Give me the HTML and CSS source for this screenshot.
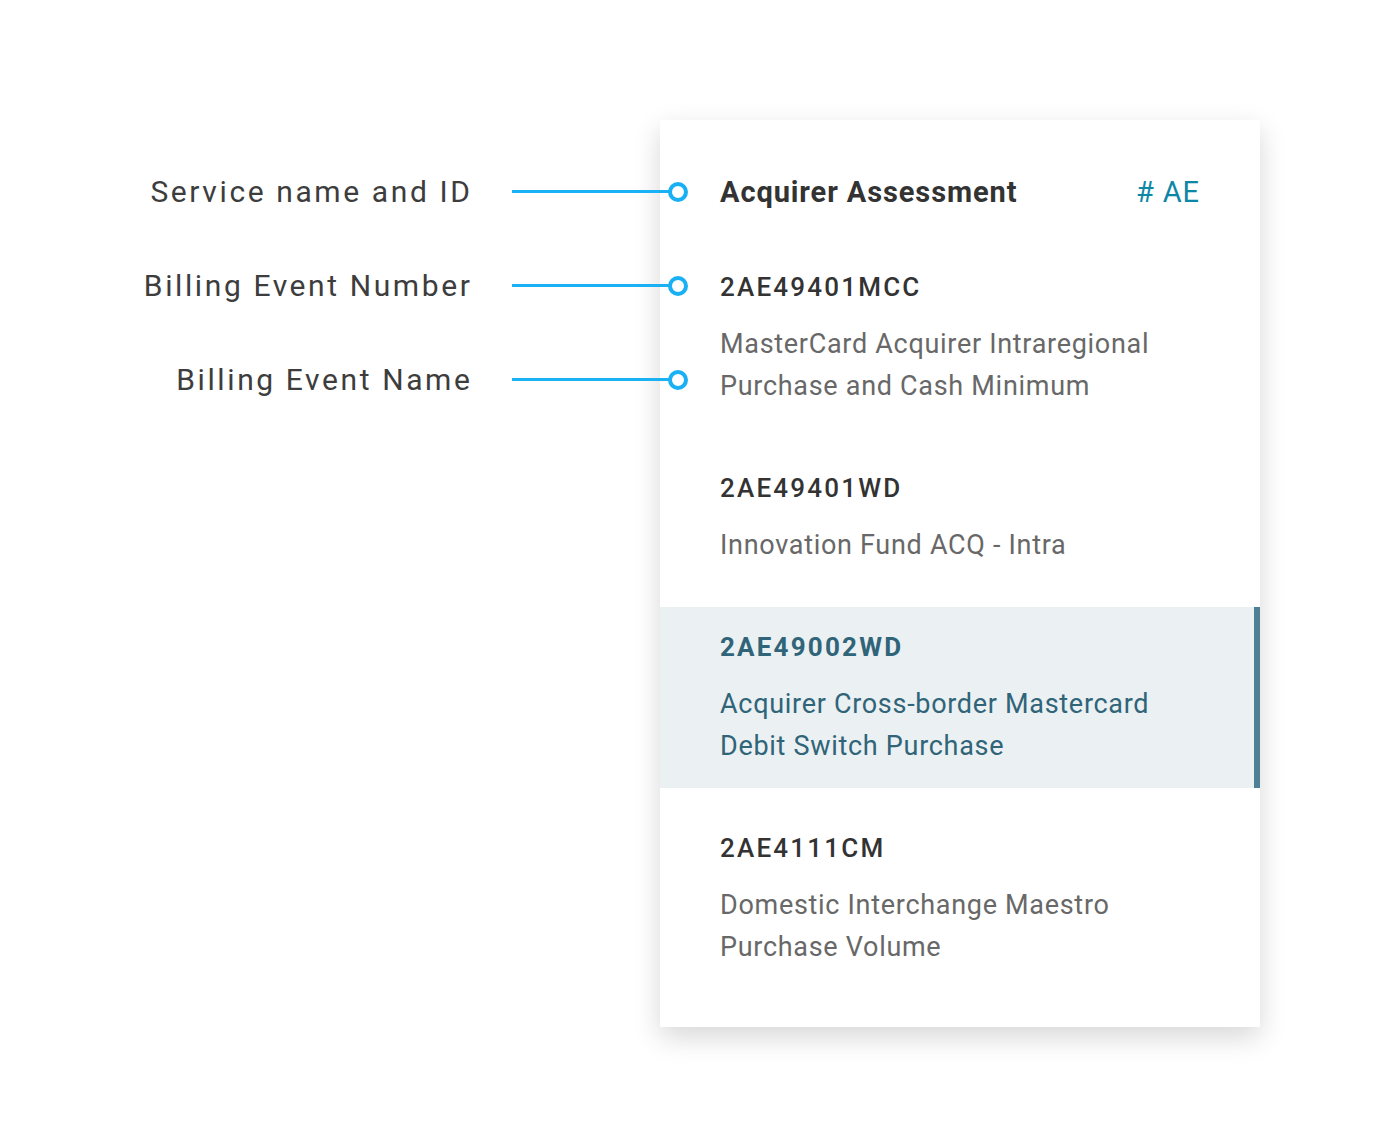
FILE: index.html
```html
<!DOCTYPE html>
<html lang="en">
<head>
<meta charset="utf-8">
<title>Billing Event List</title>
<link rel="stylesheet" href="styles.css">
</head>
<body>
<div class="stage">
  <div class="annotations">
    <div class="note">
      <span class="note-label">Service name and ID</span>
      <span class="note-line"></span>
      <span class="note-dot"></span>
    </div>
    <div class="note">
      <span class="note-label">Billing Event Number</span>
      <span class="note-line"></span>
      <span class="note-dot"></span>
    </div>
    <div class="note">
      <span class="note-label">Billing Event Name</span>
      <span class="note-line"></span>
      <span class="note-dot"></span>
    </div>
  </div>
  <div class="card">
    <div class="card-head">
      <span class="service-name">Acquirer Assessment</span>
      <span class="service-id"># AE</span>
    </div>
    <ul class="events">
      <li class="event">
        <div class="event-code">2AE49401MCC</div>
        <div class="event-name">MasterCard Acquirer Intraregional Purchase and Cash Minimum</div>
      </li>
      <li class="event">
        <div class="event-code">2AE49401WD</div>
        <div class="event-name">Innovation Fund ACQ - Intra</div>
      </li>
      <li class="event event-active">
        <div class="event-code">2AE49002WD</div>
        <div class="event-name">Acquirer Cross-border Mastercard Debit Switch Purchase</div>
      </li>
      <li class="event">
        <div class="event-code">2AE4111CM</div>
        <div class="event-name">Domestic Interchange Maestro Purchase Volume</div>
      </li>
    </ul>
  </div>
</div>
</body>
</html>
```

FILE: styles.css
```css
* { box-sizing: border-box; }

html, body {
  margin: 0;
  padding: 0;
  background: #ffffff;
}

body {
  font-family: Roboto, "Liberation Sans", sans-serif;
  color: #333333;
}

.stage {
  display: flex;
  align-items: flex-start;
  padding-top: 120px;
  padding-bottom: 120px;
}

.annotations {
  position: relative;
  z-index: 1;
  width: 688px;
  margin-right: -28px;
  padding-top: 51.5px;
  display: flex;
  flex-direction: column;
  gap: 54px;
}

.note {
  display: flex;
  align-items: center;
  justify-content: flex-end;
  height: 40px;
}

.note-label {
  font-size: 30px;
  line-height: 40px;
  letter-spacing: 2.6px;
  color: #3d3d3d;
  white-space: nowrap;
}

.note-line {
  width: 158px;
  height: 3px;
  margin-left: 39.5px;
  background: #1ab1f4;
}

.note-dot {
  width: 20px;
  height: 20px;
  margin-left: -2px;
  border: 4px solid #1ab1f4;
  border-radius: 50%;
  background: #ffffff;
}

.card {
  width: 600px;
  background: #ffffff;
  padding: 52px 0 38px;
  box-shadow: 0 10px 26px rgba(0, 0, 0, 0.16);
}

.card-head {
  display: flex;
  justify-content: space-between;
  align-items: baseline;
  padding: 0 60px;
  height: 40px;
  line-height: 40px;
}

.service-name {
  font-size: 29px;
  font-weight: 700;
  letter-spacing: 0.9px;
  color: #333333;
}

.service-id {
  font-size: 29px;
  font-weight: 400;
  letter-spacing: 0.9px;
  color: #0e86a6;
}

.events {
  list-style: none;
  margin: 35px 0 0;
  padding: 0;
  display: flex;
  flex-direction: column;
  gap: 20px;
}

.event {
  padding: 23px 60px 21px;
}

.event-code {
  font-size: 26px;
  line-height: 34px;
  font-weight: 500;
  letter-spacing: 2.2px;
  color: #333333;
}

.event-name {
  margin-top: 19px;
  max-width: 470px;
  font-size: 27px;
  line-height: 42px;
  letter-spacing: 0.7px;
  color: #686868;
}

.event-active {
  background: #ebf0f2;
  border-right: 6px solid #4f7f95;
}

.event-active .event-code {
  font-weight: 700;
  color: #2f6479;
}

.event-active .event-name {
  color: #2f6479;
}
```
